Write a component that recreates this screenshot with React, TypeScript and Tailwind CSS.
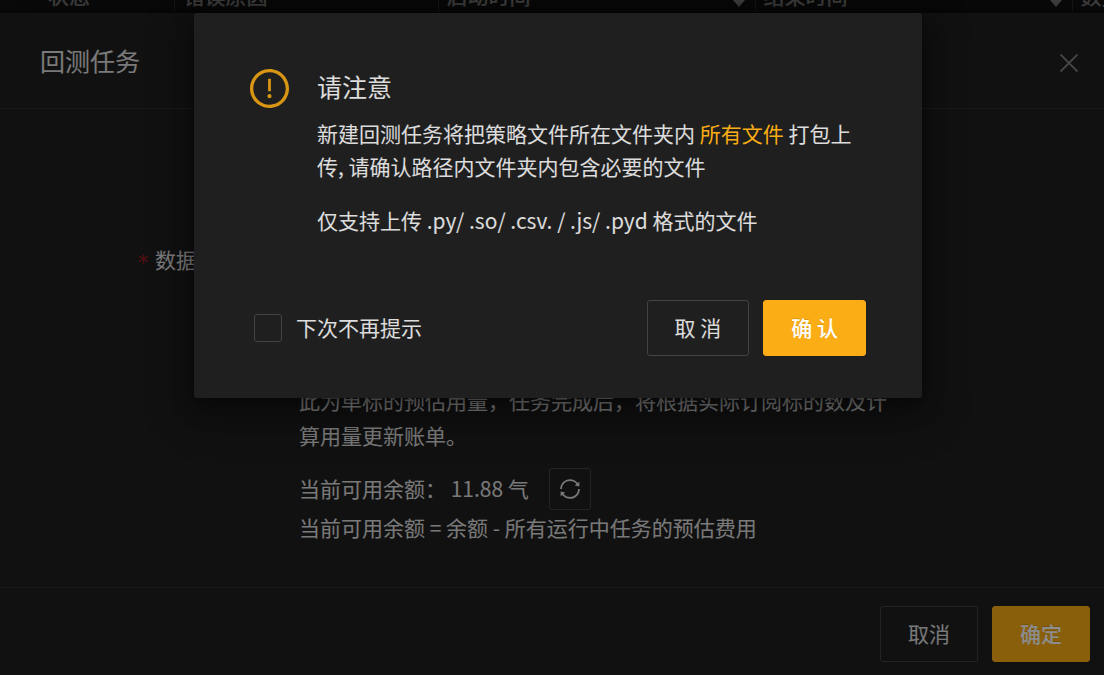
import { useState } from "react";
import {
  AiOutlineExclamationCircle,
  AiOutlineSync,
} from "react-icons/ai";

const outlineButton =
  "h-14 px-[27px] rounded-[3px] border border-[#434343] text-white/85";
const primaryButton =
  "h-14 px-[27px] rounded-[3px] border border-[#faad14] bg-[#faad14] font-medium text-white [text-shadow:0_-1px_0_rgba(0,0,0,0.12)]";

function SortCaret() {
  return (
    <svg width="12" height="22" viewBox="0 0 12 22" fill="currentColor">
      <path d="M6 0l6 7H0z" />
      <path d="M6 22l6-7H0z" />
    </svg>
  );
}

function HistoryTable() {
  return (
    <div className="flex h-[13px] items-end overflow-hidden bg-[#141414] pb-px">
      <table className="w-full table-fixed border-collapse text-left leading-[33px] whitespace-nowrap text-white/85">
        <thead>
          <tr className="opacity-55">
            <th className="w-[174px] border-r border-[#303030] pl-12 font-medium">
              状态
            </th>
            <th className="w-[264px] border-r border-[#303030] pl-[9px] font-medium">
              错误原因
            </th>
            <th className="w-[317px] border-r border-[#303030] pr-2.5 pl-2 font-medium">
              <div className="flex items-center justify-between">
                启动时间
                <SortCaret />
              </div>
            </th>
            <th className="w-[317px] border-r border-[#303030] pr-2.5 pl-2 font-medium">
              <div className="flex items-center justify-between">
                结束时间
                <SortCaret />
              </div>
            </th>
            <th className="overflow-hidden pl-2 font-medium">数据</th>
          </tr>
        </thead>
      </table>
    </div>
  );
}

function TaskDrawer() {
  return (
    <section className="relative flex flex-1 flex-col bg-[#1f1f1f] shadow-[0_-9px_24px_rgba(0,0,0,0.4)]">
      <header className="flex h-24 items-center justify-between border-b border-[#303030] pr-[26px] pb-0.5 pl-10">
        <h1 className="text-[25px] leading-[34px] text-white/85">回测任务</h1>
        <button type="button" aria-label="关闭" className="pt-1.5 text-white/45">
          <svg width="18" height="18" viewBox="0 0 18 18" fill="none" stroke="currentColor" strokeWidth="1.8">
            <path d="M0.5 0.5l17 17M17.5 0.5l-17 17" />
          </svg>
        </button>
      </header>

      <div className="flex-1 pt-[134px] pb-10 text-white/85">
        <div className="flex items-end pl-[138px] leading-[33px]">
          <span className="w-[17px] font-['DejaVu_Sans',sans-serif] leading-[26px] text-[#a61d24]">
            *
          </span>
          <span>数据</span>
        </div>
        <div className="mt-[107px] ml-[299px] max-w-[604px]">
          <p className="leading-[35px]">
            此为单标的预估用量，任务完成后，将根据实际订阅标的数及计算用量更新账单。
          </p>
          <div className="mt-[15px] flex items-center">
            <span>当前可用余额： 11.88 气</span>
            <button
              type="button"
              aria-label="刷新"
              className="ml-5 flex size-[42px] items-center justify-center rounded-[3px] border border-[#434343]"
            >
              <AiOutlineSync size={24} />
            </button>
          </div>
          <p className="mt-px leading-[33px]">
            当前可用余额 = 余额 - 所有运行中任务的预估费用
          </p>
        </div>
      </div>

      <footer className="flex justify-end gap-3.5 border-t border-[#303030] px-3.5 pt-[18px] pb-[13px]">
        <button type="button" className={outlineButton}>
          取消
        </button>
        <button type="button" className={primaryButton}>
          确定
        </button>
      </footer>
    </section>
  );
}

function NoticeModal() {
  const [skip, setSkip] = useState(false);

  return (
    <div className="absolute inset-0 flex items-start justify-center bg-black/45 pt-[13px] pl-3">
      <div
        role="dialog"
        aria-labelledby="notice-title"
        className="w-full max-w-[728px] rounded-[3px] bg-[#1f1f1f] px-14 pt-14 pb-[42px] text-white/85 shadow-[0_4px_9px_-6px_rgba(0,0,0,0.48),0_9px_24px_rgba(0,0,0,0.32),0_14px_42px_12px_rgba(0,0,0,0.2)]"
      >
        <div className="flex items-start gap-7">
          <AiOutlineExclamationCircle
            size={39}
            viewBox="64 64 896 896"
            className="shrink-0 text-[#d89614]"
          />
          <div>
            <h2 id="notice-title" className="text-[25px] leading-[34px]">
              请注意
            </h2>
            <div className="mt-3.5 leading-[33px]">
              <p>
                新建回测任务将把策略文件所在文件夹内{" "}
                <span className="text-[#faad14]">所有文件</span>{" "}
                打包上传, 请确认路径内文件夹内包含必要的文件
              </p>
              <p className="mt-[21px]">
                仅支持上传 .py/ .so/ .csv. / .js/ .pyd 格式的文件
              </p>
            </div>
          </div>
        </div>

        <div className="mt-[63px] flex items-center gap-3.5">
          <label className="mr-auto ml-1 flex items-center gap-3.5">
            <input
              type="checkbox"
              checked={skip}
              onChange={(e) => setSkip(e.target.checked)}
              className="size-7 appearance-none rounded-[3px] border border-[#434343] checked:bg-[#faad14]"
            />
            下次不再提示
          </label>
          <button type="button" className={outlineButton}>
            取 消
          </button>
          <button type="button" className={primaryButton}>
            确 认
          </button>
        </div>
      </div>
    </div>
  );
}

export default function App() {
  return (
    <div className="relative flex min-h-screen flex-col overflow-hidden bg-[#1f1f1f] font-['Noto_Sans_CJK_SC',sans-serif] text-[21px]">
      <HistoryTable />
      <TaskDrawer />
      <NoticeModal />
    </div>
  );
}
